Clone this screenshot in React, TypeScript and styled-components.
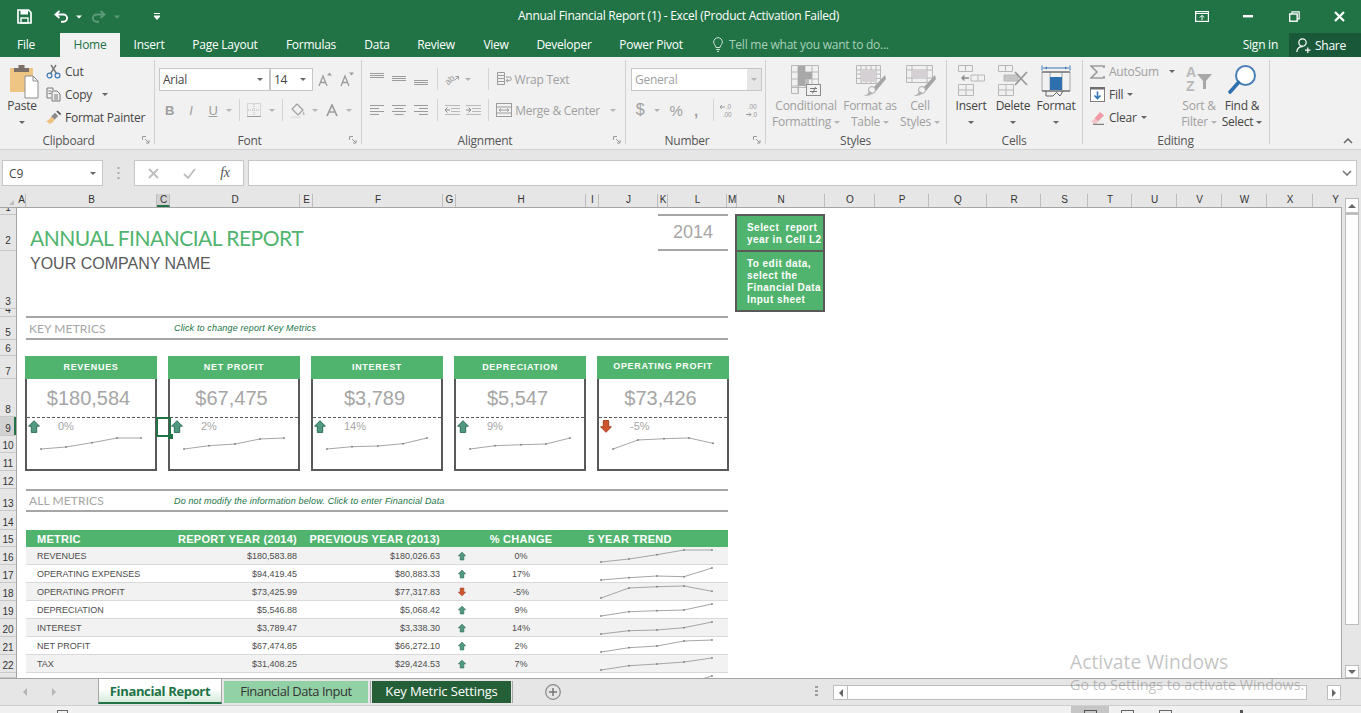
import React from "react";
import styled, { createGlobalStyle } from "styled-components";

const excelGreen = "#217346";
const reportGreen = "#50b46e";
const uiFont = `"Open Sans", "Liberation Sans", sans-serif`;
const arial = `"Liberation Sans", Arial, sans-serif`;

const GlobalStyle = createGlobalStyle`
  html, body { margin: 0; padding: 0; overflow: hidden; background: #fff; }
  * { box-sizing: border-box; }
`;

const Window = styled.div`
  position: relative;
  width: 1361px;
  height: 713px;
  overflow: hidden;
  display: flex;
  flex-direction: column;
  font-family: ${uiFont};
  font-size: 12px;
  letter-spacing: -0.25px;
  color: #444;
  background: #e6e6e6;
`;

/* title bar */
const TitleBar = styled.div`
  position: relative;
  height: 33px;
  flex: none;
  display: flex;
  align-items: center;
  background: ${excelGreen};
  color: #fff;
`;
const TitleText = styled.div`
  position: absolute;
  left: 0;
  right: 4px;
  top: 8px;
  text-align: center;
  line-height: 16px;
`;
const QuickCell = styled.div<{ $w: number }>`
  width: ${(p) => p.$w}px;
  height: 30px;
  flex: none;
  display: flex;
  align-items: center;
  justify-content: center;
`;
const Spring = styled.div`
  flex: 1;
`;

/* ribbon tabs */
const TabBar = styled.div`
  height: 24px;
  flex: none;
  display: flex;
  background: ${excelGreen};
  color: #fff;
`;
const RibbonTab = styled.div<{ $w: number; $active?: boolean }>`
  width: ${(p) => p.$w}px;
  flex: none;
  text-align: center;
  line-height: 23px;
  background: ${(p) => (p.$active ? "#f1f1f1" : "transparent")};
  color: ${(p) => (p.$active ? excelGreen : "#fff")};
`;
const FileGap = styled.div`
  width: 8px;
  flex: none;
`;
const TellMe = styled.div`
  margin-left: 15px;
  display: flex;
  align-items: center;
  gap: 6px;
  color: #a9d0b9;
  height: 23px;
`;
const SignIn = styled.div`
  line-height: 23px;
  margin-right: 11px;
`;
const ShareBtn = styled.div`
  width: 72px;
  display: flex;
  align-items: center;
  gap: 4px;
  padding-left: 7px;
  background: #19593a;
`;

/* ribbon */
const Ribbon = styled.div`
  position: relative;
  height: 93px;
  flex: none;
  display: flex;
  background: #f1f1f1;
  border-bottom: 1px solid #d2d2d2;
`;
const Group = styled.div<{ $w: number }>`
  width: ${(p) => p.$w}px;
  flex: none;
  display: flex;
  flex-direction: column;
  position: relative;
  &::after {
    content: "";
    position: absolute;
    right: 0;
    top: 3px;
    bottom: 5px;
    width: 1px;
    background: #d0d0d0;
  }
`;
const GroupBody = styled.div<{ $pl?: number }>`
  height: 75px;
  flex: none;
  display: flex;
  padding-left: ${(p) => p.$pl ?? 0}px;
`;
const GroupFoot = styled.div<{ $launch?: boolean }>`
  position: relative;
  height: 17px;
  flex: none;
  text-align: center;
  line-height: 17px;
  padding-right: ${(p) => (p.$launch ? 18 : 2)}px;
  color: #555;
`;
const Launcher = styled.svg`
  position: absolute;
  right: 5px;
  top: 4px;
`;
const RowStack = styled.div`
  display: flex;
  flex-direction: column;
  gap: 9px;
  padding-top: 11px;
`;
const ToolRow = styled.div`
  display: flex;
  height: 22px;
  align-items: center;
`;
const Cell = styled.div<{ $w: number; $off?: boolean }>`
  width: ${(p) => p.$w}px;
  height: 22px;
  flex: none;
  display: flex;
  align-items: center;
  justify-content: center;
  white-space: nowrap;
  color: ${(p) => (p.$off ? "#a0a0a0" : "#444")};
`;
const Sep = styled.div`
  width: 1px;
  height: 22px;
  flex: none;
  background: #d4d4d4;
`;
const Glyph = styled.span<{ $size?: number; $bold?: boolean; $italic?: boolean; $under?: boolean }>`
  font-family: ${arial};
  font-size: ${(p) => p.$size ?? 13}px;
  font-weight: ${(p) => (p.$bold ? 700 : 400)};
  font-style: ${(p) => (p.$italic ? "italic" : "normal")};
  text-decoration: ${(p) => (p.$under ? "underline" : "none")};
  color: #a0a0a0;
`;
const Caret = styled.i<{ $dim?: boolean }>`
  display: block;
  width: 0;
  height: 0;
  flex: none;
  border-left: 3px solid transparent;
  border-right: 3px solid transparent;
  border-top: 3px solid ${(p) => (p.$dim ? "#b4b4b4" : "#666")};
`;
const Combo = styled.div<{ $w: number; $off?: boolean }>`
  width: ${(p) => p.$w}px;
  height: 23px;
  flex: none;
  display: flex;
  align-items: center;
  justify-content: space-between;
  padding: 0 6px 0 3px;
  background: #fff;
  border: 1px solid #c6c6c6;
  color: ${(p) => (p.$off ? "#a0a0a0" : "#444")};
  margin-left: ${(p) => (p.$off ? 5 : 0)}px;
`;
const ComboDrop = styled.div`
  width: 14px;
  height: 21px;
  margin-right: -6px;
  display: flex;
  align-items: center;
  justify-content: center;
  background: #e6e6e6;
`;
const SmallColumn = styled.div<{ $pl: number; $w: number }>`
  width: ${(p) => p.$w}px;
  flex: none;
  padding: 3px 0 0 ${(p) => p.$pl}px;
`;
const SmallBtn = styled.div<{ $off?: boolean }>`
  height: 23px;
  display: flex;
  align-items: center;
  gap: 4px;
  color: ${(p) => (p.$off ? "#a0a0a0" : "#444")};
`;
const IconSlot = styled.div`
  width: 15px;
  height: 16px;
  flex: none;
  display: flex;
  align-items: center;
  justify-content: center;
`;
const BigBtn = styled.div<{ $w: number; $off?: boolean }>`
  width: ${(p) => p.$w}px;
  flex: none;
  display: flex;
  flex-direction: column;
  align-items: center;
  color: ${(p) => (p.$off ? "#a0a0a0" : "#444")};
`;
const BigIcon = styled.div<{ $nudge?: number }>`
  height: 41px;
  padding: 8px 0 0 ${(p) => p.$nudge ?? 0}px;
  flex: none;
`;
const BigLabel = styled.div`
  line-height: 16px;
  text-align: center;
  white-space: nowrap;
  display: flex;
  align-items: center;
  justify-content: center;
  gap: 3px;
  min-height: 16px;
`;
const Collapse = styled.svg`
  position: absolute;
  right: 8px;
  bottom: 5px;
`;

/* formula bar */
const FormulaBar = styled.div`
  height: 44px;
  flex: none;
  display: flex;
  align-items: flex-start;
  padding: 10px 4px 0 2px;
  background: #e6e6e6;
`;
const FormulaBox = styled.div<{ $w?: number }>`
  width: ${(p) => (p.$w ? `${p.$w}px` : "auto")};
  flex: ${(p) => (p.$w ? "none" : 1)};
  height: 26px;
  display: flex;
  align-items: center;
  background: #fff;
  border: 1px solid #c6c6c6;
`;
const NameText = styled.div`
  flex: 1;
  padding-left: 6px;
  letter-spacing: 0;
`;
const FormulaDots = styled.div`
  width: 31px;
  height: 26px;
  flex: none;
  display: flex;
  align-items: center;
  justify-content: center;
`;
const FxCell = styled.div`
  width: 36px;
  flex: none;
  display: flex;
  justify-content: center;
`;
const FxText = styled.span`
  font-family: "Liberation Serif", serif;
  font-style: italic;
  font-size: 14px;
  color: #555;
`;

/* worksheet */
const Main = styled.div`
  height: 484px;
  flex: none;
  display: flex;
`;
const GridArea = styled.div`
  width: 1342px;
  flex: none;
  display: flex;
  flex-direction: column;
`;
const ColHeads = styled.div`
  height: 13px;
  flex: none;
  display: flex;
  overflow: hidden;
`;
const Corner = styled.div`
  width: 17px;
  flex: none;
  display: flex;
  align-items: flex-end;
  justify-content: flex-end;
  padding: 0 3px 2px 0;
`;
const ColHead = styled.div<{ $w: number; $sel?: boolean }>`
  width: ${(p) => p.$w}px;
  flex: none;
  padding-left: 1px;
  font-family: ${arial};
  font-size: 10px;
  letter-spacing: 0;
  line-height: 12px;
  text-align: center;
  color: #333;
  border-right: 1px solid #bdbdbd;
  background: ${(p) => (p.$sel ? "#d2d2d2" : "transparent")};
  border-bottom: ${(p) => (p.$sel ? `2px solid ${excelGreen}` : "0")};
`;
const GridBody = styled.div`
  flex: 1;
  display: flex;
  min-height: 0;
  border-top: 1px solid #a6a6a6;
`;
const RowHeads = styled.div`
  width: 17px;
  flex: none;
  display: flex;
  flex-direction: column;
  overflow: hidden;
  border-right: 1px solid #a6a6a6;
`;
const RowHead = styled.div<{ $h: number; $sel?: boolean; $lift?: number }>`
  height: ${(p) => p.$h}px;
  flex: none;
  display: flex;
  align-items: flex-end;
  justify-content: center;
  overflow: hidden;
  padding-bottom: ${(p) => p.$lift ?? 0}px;
  font-family: ${arial};
  font-size: 10px;
  letter-spacing: 0;
  line-height: 12px;
  color: #333;
  border-bottom: 1px solid #c8c8c8;
  background: ${(p) => (p.$sel ? "#d2d2d2" : "transparent")};
  box-shadow: ${(p) => (p.$sel ? `inset -2px 0 0 ${excelGreen}` : "none")};
`;
const Sheet = styled.div`
  position: relative;
  flex: 1;
  display: flex;
  overflow: hidden;
  background: #fff;
  border-right: 1px solid #a6a6a6;
  font-family: ${arial};
  letter-spacing: 0;
`;
const Report = styled.div`
  width: 702px;
  margin-left: 9px;
  flex: none;
  display: flex;
  flex-direction: column;
`;
const ReportHead = styled.div`
  height: 108px;
  flex: none;
  display: flex;
  justify-content: space-between;
`;
const TitleBlock = styled.div`
  padding: 16px 0 0 4px;
`;
const ReportTitle = styled.div`
  font-family: Lato, sans-serif;
  font-size: 21px;
  line-height: 28px;
  letter-spacing: -0.5px;
  color: ${reportGreen};
`;
const CompanyName = styled.div`
  font-size: 16px;
  line-height: 20px;
  margin-top: 2px;
  color: #595959;
`;
const YearBox = styled.div`
  width: 70px;
  height: 37px;
  margin-top: 6px;
  display: flex;
  align-items: center;
  justify-content: center;
  font-size: 18px;
  color: #a6a6a6;
  border-top: 2px solid #a6a6a6;
  border-bottom: 2px solid #a6a6a6;
`;
const SectionBar = styled.div<{ $mt?: number; $h: number }>`
  height: ${(p) => p.$h}px;
  flex: none;
  margin-top: ${(p) => p.$mt ?? 0}px;
  display: flex;
  align-items: center;
  padding-left: 3px;
  border-top: 2px solid #a6a6a6;
  border-bottom: 2px solid #a6a6a6;
`;
const SectionTitle = styled.div`
  width: 145px;
  flex: none;
  font-family: Lato, sans-serif;
  font-size: 12px;
  letter-spacing: 0.1px;
  color: #a6a6a6;
`;
const SectionHint = styled.div`
  font-size: 9px;
  font-style: italic;
  letter-spacing: 0.15px;
  color: ${excelGreen};
`;
const CardRow = styled.div`
  height: 115px;
  flex: none;
  margin: 16px 0 0 -1px;
  display: flex;
  gap: 11px;
`;
const Card = styled.div`
  flex: 1;
  display: flex;
  flex-direction: column;
`;
const CardHead = styled.div<{ $up?: number }>`
  height: 23px;
  flex: none;
  text-align: center;
  padding-bottom: ${(p) => p.$up ?? 0}px;
  line-height: ${(p) => 23 - (p.$up ?? 0)}px;
  font-size: 9px;
  font-weight: 700;
  letter-spacing: 0.7px;
  color: #fff;
  background: ${reportGreen};
`;
const CardBody = styled.div`
  flex: 1;
  display: flex;
  flex-direction: column;
  border: 2px solid #595959;
  border-top: 0;
`;
const CardValue = styled.div`
  height: 39px;
  flex: none;
  display: flex;
  align-items: center;
  justify-content: center;
  padding: 1px 5px 0 0;
  font-size: 20px;
  color: #a6a6a6;
  border-bottom: 1px dashed #595959;
`;
const CardDelta = styled.div`
  height: 18px;
  flex: none;
  display: flex;
  align-items: center;
  padding: 0 0 2px 1px;
  font-size: 11px;
  color: #a6a6a6;
`;
const DeltaText = styled.span`
  margin-left: 18px;
`;
const Notes = styled.div`
  width: 90px;
  margin: 6px 0 0 7px;
  flex: none;
  align-self: flex-start;
  border: 2px solid #595959;
  background: ${reportGreen};
`;
const Note = styled.div<{ $divide?: boolean }>`
  padding: 6px 0 4px 10px;
  font-size: 10px;
  font-weight: 700;
  line-height: 12px;
  letter-spacing: 0.45px;
  color: #fff;
  white-space: nowrap;
  border-top: ${(p) => (p.$divide ? "2px solid #595959" : "0")};
`;
const Table = styled.div`
  margin-top: 18px;
  flex: none;
`;
const TRow = styled.div<{ $odd?: boolean }>`
  height: 18px;
  display: grid;
  grid-template-columns: 152px 120px 143px 42px 76px 169px;
  align-items: center;
  font-size: 9px;
  color: #4d4d4d;
  background: ${(p) => (p.$odd ? "#f2f2f2" : "#fff")};
  border-bottom: 1px solid #d9d9d9;
`;
const THead = styled(TRow)`
  height: 17px;
  font-size: 11px;
  font-weight: 700;
  letter-spacing: 0.27px;
  color: #fff;
  background: ${reportGreen};
  border-bottom: 0;
`;
const MetricCell = styled.div`
  padding-left: 11px;
  white-space: nowrap;
`;
const NumCell = styled.div`
  padding-right: 1px;
  text-align: right;
  white-space: nowrap;
`;
const MidCell = styled.div`
  display: flex;
  justify-content: center;
`;
const TrendCell = styled.div`
  height: 18px;
  padding-left: 41px;
  align-self: start;
`;
const TrendTitle = styled.div`
  padding-left: 29px;
  white-space: nowrap;
`;
const Selection = styled.div`
  position: absolute;
  left: 139px;
  top: 209px;
  width: 15px;
  height: 20px;
  border: 2px solid ${excelGreen};
  &::after {
    content: "";
    position: absolute;
    right: -4px;
    bottom: -4px;
    width: 5px;
    height: 5px;
    background: ${excelGreen};
  }
`;

/* scrollbars */
const VScroll = styled.div`
  flex: 1;
  padding: 4px 2px 0 3px;
  display: flex;
  flex-direction: column;
`;
const ScrollBtn = styled.div<{ $w?: number; $h?: number }>`
  width: ${(p) => (p.$w ? `${p.$w}px` : "auto")};
  height: ${(p) => (p.$h ? `${p.$h}px` : "auto")};
  flex: none;
  display: flex;
  align-items: center;
  justify-content: center;
  background: #fff;
  border: 1px solid #bdbdbd;
`;
const VThumb = styled.div`
  height: 412px;
  flex: none;
  background: #fff;
  border: 1px solid #bdbdbd;
  border-top-width: 2px;
`;
const VTrack = styled.div`
  flex: 1;
`;
const UpTri = styled.i`
  display: block;
  width: 0;
  height: 0;
  border-left: 4px solid transparent;
  border-right: 4px solid transparent;
  border-bottom: 4px solid #666;
`;
const DownTri = styled(UpTri)`
  border-bottom: 0;
  border-top: 4px solid #666;
`;
const LeftTri = styled.i`
  display: block;
  width: 0;
  height: 0;
  border-top: 4px solid transparent;
  border-bottom: 4px solid transparent;
  border-right: 4px solid #666;
`;
const RightTri = styled(LeftTri)`
  border-right: 0;
  border-left: 4px solid #666;
`;
const DimLeft = styled(LeftTri)`
  border-right-color: #b4b4b4;
`;
const DimRight = styled(RightTri)`
  border-left-color: #b4b4b4;
`;

/* sheet tabs */
const tabSpacing = { current: -0.35, light: -0.45, dark: -0.15 };
const SheetTabs = styled.div`
  height: 28px;
  flex: none;
  display: flex;
  background: #e6e6e6;
  border-top: 1px solid #a6a6a6;
  border-bottom: 1px solid #cfcfcf;
`;
const TabNav = styled.div`
  width: 98px;
  height: 25px;
  flex: none;
  display: flex;
  align-items: center;
  gap: 25px;
  padding-left: 23px;
`;
const SheetTab = styled.div<{ $w: number; $kind: "current" | "light" | "dark" }>`
  width: ${(p) => p.$w}px;
  flex: none;
  margin-top: ${(p) => (p.$kind === "current" ? 0 : 2)}px;
  height: ${(p) => (p.$kind === "current" ? 25 : 22)}px;
  text-align: center;
  font-size: 13px;
  letter-spacing: ${(p) => tabSpacing[p.$kind]}px;
  line-height: ${(p) => (p.$kind === "current" ? 25 : 21)}px;
  font-weight: ${(p) => (p.$kind === "current" ? 700 : 400)};
  color: ${(p) => (p.$kind === "current" ? excelGreen : p.$kind === "dark" ? "#fff" : "#333")};
  background: ${(p) =>
    p.$kind === "current"
      ? "linear-gradient(#ffffff 40%, #d4ecdb)"
      : p.$kind === "dark"
        ? "#245f38"
        : "#92d1a6"};
  border-bottom: ${(p) => (p.$kind === "current" ? `2px solid ${excelGreen}` : "0")};
  border-left: ${(p) => (p.$kind === "current" ? "1px solid #a6a6a6" : "0")};
  border-right: ${(p) => (p.$kind === "current" ? "1px solid #a6a6a6" : "0")};
`;
const TabSep = styled.div<{ $ml: number; $mr: number }>`
  width: 1px;
  height: 22px;
  margin: 2px ${(p) => p.$mr}px 0 ${(p) => p.$ml}px;
  flex: none;
  background: #a6a6a6;
`;
const AddSheet = styled.div`
  width: 16px;
  height: 16px;
  margin: 5px 0 0 32px;
  flex: none;
`;
const TabDots = styled.div`
  width: 3px;
  height: 12px;
  margin: 7px 0 0 254px;
  flex: none;
  background: repeating-linear-gradient(#9c9c9c 0 2px, transparent 2px 4px);
`;
const HScroll = styled.div`
  width: 508px;
  height: 15px;
  margin: 6px 0 0 15px;
  flex: none;
  display: flex;
`;
const HThumb = styled.div`
  width: 459px;
  flex: none;
  background: #fff;
  border: 1px solid #bdbdbd;
  border-left-width: 0;
`;
const HTrack = styled.div`
  flex: 1;
`;

/* status bar */
const StatusBar = styled.div`
  flex: 1;
  display: flex;
  background: #f1f1f1;
  overflow: hidden;
`;
const StatusMark = styled.div<{ $ml: number; $w: number }>`
  width: ${(p) => p.$w}px;
  height: 3px;
  margin: 4px 0 0 ${(p) => p.$ml}px;
  flex: none;
  border: 1px solid #666;
  border-bottom: 0;
`;
const ViewActive = styled.div`
  width: 38px;
  margin-left: 1003px;
  flex: none;
  display: flex;
  justify-content: center;
  background: #c6c6c6;
`;
const ViewIcon = styled.div`
  width: 13px;
  height: 3px;
  margin-top: 4px;
  border: 1px solid #555;
  border-bottom: 0;
`;
const ZoomTick = styled.div`
  width: 3px;
  height: 3px;
  margin: 4px 0 0 68px;
  flex: none;
  background: #555;
`;

const Watermark = styled.div`
  position: absolute;
  left: 1070px;
  top: 648px;
  color: rgba(110, 110, 110, 0.42);
  letter-spacing: 0;
  pointer-events: none;
  white-space: nowrap;
`;
const WatermarkTitle = styled.div`
  font-size: 19.3px;
  line-height: 27px;
`;
const WatermarkSub = styled.div`
  font-size: 14.3px;
  line-height: 20px;
`;

/* ---- icons ---- */
const Svg = ({ w, h, children }: { w: number; h: number; children: React.ReactNode }) => (
  <svg width={w} height={h} viewBox={`0 0 ${w} ${h}`} fill="none" style={{ display: "block" }}>
    {children}
  </svg>
);

const gray = "#9c9c9c";
const lightGray = "#b8b8b8";

const SaveIcon = () => (
  <Svg w={15} h={15}>
    <path d="M1 1h10.500L14 3.500V14H1z" stroke="#fff" strokeWidth="1.700" />
    <rect x="3.500" y="1" width="7.500" height="4.500" fill="#fff" />
    <rect x="4" y="9" width="7" height="5" stroke="#fff" strokeWidth="1.400" />
  </Svg>
);
const UndoIcon = ({ color, flip }: { color: string; flip?: boolean }) => (
  <svg width="15" height="13" viewBox="0 0 15 13" fill="none" style={{ transform: flip ? "scaleX(-1)" : "none" }}>
    <path d="M5.500 1L1.500 4.500L5.500 8M2 4.500h7.500a3.600 3.600 0 0 1 0 7.200H7" stroke={color} strokeWidth="1.900" />
  </svg>
);
const TinyCaret = ({ color }: { color: string }) => (
  <Svg w={6} h={4}>
    <path d="M0 .5h6L3 3.500z" fill={color} />
  </Svg>
);
const CustomizeIcon = () => (
  <Svg w={7} h={7}>
    <path d="M0 .5h6M0 3h6L3 6.500z" stroke="#fff" strokeWidth="1" fill="#fff" />
  </Svg>
);
const DisplayIcon = () => (
  <Svg w={14} h={11}>
    <rect x=".6" y=".6" width="12.800" height="9.800" stroke="#fff" strokeWidth="1.200" />
    <path d="M1 2.500h12M7 9V4.500M4.800 6.500L7 4.300l2.200 2.200" stroke="#fff" />
  </Svg>
);
const MinIcon = () => (
  <Svg w={10} h={3}>
    <rect width="10" height="2.400" fill="#fff" />
  </Svg>
);
const RestoreIcon = () => (
  <Svg w={11} h={11}>
    <rect x=".7" y="3" width="7.500" height="7.200" stroke="#fff" strokeWidth="1.400" />
    <path d="M3 3V.8h7.200v7H8" stroke="#fff" strokeWidth="1.200" />
  </Svg>
);
const CloseIcon = () => (
  <Svg w={11} h={11}>
    <path d="M1 1l9 9M10 1l-9 9" stroke="#fff" strokeWidth="2.200" />
  </Svg>
);
const BulbIcon = () => (
  <Svg w={10} h={15}>
    <path d="M3 10.500C2.500 8 .7 7.500.7 5a4.300 4.300 0 0 1 8.600 0c0 2.500-1.800 3-2.300 5.500zM3.200 12.500h3.600M4 14.400h2" stroke="#cfe3d7" strokeWidth="1" />
  </Svg>
);
const PersonIcon = () => (
  <Svg w={15} h={15}>
    <circle cx="6.500" cy="4.500" r="3.700" stroke="#fff" strokeWidth="1.200" />
    <path d="M.8 14c.3-3.200 2.400-5.400 5.700-5.400M9 12.200h5.500M11.800 9.500V15" stroke="#fff" strokeWidth="1.200" />
  </Svg>
);
const PasteIcon = () => (
  <Svg w={30} h={34}>
    <path d="M1 3h23v24H1z" fill="#eec583" />
    <path d="M5 3h15v4H5zM9.500 0h6v3h-6z" fill="#7b7067" />
    <path d="M16 11h8l5 5v17H16z" fill="#fff" stroke="#8e8e8e" />
    <path d="M24 11v5h5" stroke="#8e8e8e" />
  </Svg>
);
const CutIcon = () => (
  <Svg w={15} h={15}>
    <path d="M10 1L4.200 10M5 1l5.800 9" stroke="#787878" strokeWidth="1.400" />
    <circle cx="3.500" cy="11.500" r="2.400" stroke="#3d78b2" strokeWidth="1.200" />
    <circle cx="11.500" cy="11.500" r="2.400" stroke="#3d78b2" strokeWidth="1.200" />
  </Svg>
);
const CopyIcon = () => (
  <Svg w={15} h={15}>
    <path d="M1 1h6v2M1 1v10h4M2.500 4H5M2.500 6.500H5" stroke="#777" />
    <path d="M6 4h5l3 3v7H6zM8 8h4M8 10h4M8 12h4" stroke="#777" />
  </Svg>
);
const PainterIcon = () => (
  <Svg w={16} h={15}>
    <path d="M9.500 2.500L13 6 9 10 5.500 6.500z" fill="#8a8a8a" />
    <path d="M11 1l1.500-1L16 3.500 15 5z" fill="#555" />
    <path d="M5.500 6.500L9 10c-1 2.500-3 4-5.500 4.500C3 13 1.500 12 0 11.500c2.500-.5 4.500-2.500 5.500-5z" fill="#f0c27f" />
  </Svg>
);
const GrowFont = ({ up }: { up: boolean }) => (
  <Svg w={14} h={15}>
    <path d="M1 14L5 4l4 10M2.500 10.500h5" stroke={gray} strokeWidth="1.300" />
    <path d={up ? "M9 3.500h5L11.500 .5z" : "M9 .5h5L11.500 3.500z"} fill={gray} />
  </Svg>
);
const BorderIcon = () => (
  <Svg w={14} h={14}>
    <rect x=".5" y=".5" width="13" height="13" stroke={lightGray} strokeDasharray="1 1" />
    <path d="M7 1v12M1 7h12" stroke={lightGray} strokeDasharray="1 1" />
    <path d="M0 13.500h14" stroke={gray} />
  </Svg>
);
const FillIcon = () => (
  <Svg w={16} h={15}>
    <path d="M7 1l6 6-5 5-6-6zM7 1L5 3" stroke={gray} strokeWidth="1.100" />
    <path d="M1 13h10v2H1z" fill="#e4e4e4" />
    <path d="M13 8c1 1.500 2 2.500 1.500 3.500-.5.800-1.800.5-1.800-.5z" fill={lightGray} />
  </Svg>
);
const FontColorIcon = () => (
  <Svg w={14} h={13}>
    <path d="M2 12L7 1l5 11M3.800 8h6.400" stroke={gray} strokeWidth="1.700" />
  </Svg>
);
const Lines = ({ align }: { align: "l" | "c" | "r" }) => (
  <Svg w={14} h={12}>
    {[14, 9, 14, 9].map((w, i) => {
      const x = align === "l" ? 0 : align === "r" ? 14 - w : (14 - w) / 2;
      return <path key={i} d={`M${x} ${i * 3 + 1.5}h${w}`} stroke={gray} />;
    })}
  </Svg>
);
const VAlign = ({ top }: { top: number }) => (
  <Svg w={14} h={12}>
    {[0, 2, 4].map((d) => (
      <path key={d} d={`M0 ${top + d + 0.5}h14`} stroke={gray} />
    ))}
  </Svg>
);
const OrientIcon = () => (
  <svg width="15" height="14" viewBox="0 0 15 14" fill="none" style={{ display: "block" }}>
    <text x="1" y="12" fontFamily={arial} fontSize="9" fill={gray} transform="rotate(-45 4 10)">ab</text>
    <path d="M9.500 8.500l4-4M13.500 4.500v3M13.500 4.500h-3" stroke={gray} />
  </svg>
);
const IndentIcon = ({ out }: { out: boolean }) => (
  <Svg w={15} h={12}>
    <path d="M0 1.500h15M6 4.500h9M6 7.500h9M0 10.500h15" stroke={lightGray} />
    <path d={out ? "M5 6H0M2.500 3.500L0 6l2.500 2.500" : "M0 6h5M2.500 3.500L5 6 2.500 8.500"} stroke="#8d8d8d" />
  </Svg>
);
const WrapIcon = () => (
  <Svg w={15} h={14}>
    <path d="M.5 .5h7v3h-7zM.5 3.500h7v3h-7zM.5 6.500h7v3h-7zM.5 9.500h7v3h-7z" stroke={gray} />
    <path d="M9 5h3.500a1.800 1.800 0 0 1 0 3.600H9.500M11 7l-2 1.600 2 1.600" stroke={gray} />
  </Svg>
);
const MergeIcon = () => (
  <Svg w={16} h={14}>
    <rect x=".5" y=".5" width="15" height="13" stroke={gray} />
    <path d="M.5 4h15M.5 10h15M3 7h10M5 5.500L3 7l2 1.500M11 5.500L13 7l-2 1.500" stroke={gray} />
  </Svg>
);
const DecimalIcon = ({ more }: { more: boolean }) => (
  <svg width="16" height="15" viewBox="0 0 16 15" fill="none" style={{ display: "block" }}>
    <text x={more ? 4 : 7} y="6" fontFamily={arial} fontSize="6.5" fill={gray}>{more ? ".00" : ".0"}</text>
    <text x={more ? 8 : 4} y="13.500" fontFamily={arial} fontSize="6.5" fill={gray}>{more ? ".0" : ".00"}</text>
    <path d={more ? "M2 11.500h5M5 9.500l2 2-2 2" : "M1 4h5M3 2L1 4l2 2"} stroke={gray} />
  </svg>
);
const CondIcon = () => (
  <Svg w={30} h={31}>
    <path d="M.5 .5h27v22h-27zM7 .5v28M14 .5v22M21 .5v22M.5 7h27M.5 14h27M.5 21h7v7.500h-7z" stroke={lightGray} />
    <path d="M7 1h7v20H7z" fill="#a8a8a8" />
    <path d="M14 7h7v7h-7z" fill="#a8a8a8" />
    <path d="M14 14h4v7h-4z" fill="#bdbdbd" />
    <rect x="15.500" y="19.500" width="14" height="11" fill="#f1f1f1" stroke="#8c8c8c" />
    <path d="M19 23.500h7M19 26.500h7M24.500 22l-3 6.500" stroke="#777" />
  </Svg>
);
const TableIcon = ({ cell }: { cell?: boolean }) => (
  <Svg w={30} h={31}>
    {cell ? (
      <path d="M.5 .5h26v17h-26zM6 .5v17M21 .5v17M.5 5h26M.5 13h26" stroke={lightGray} />
    ) : (
      <path d="M.5 .5h24v18h-24zM5 .5v18M10 .5v18M15 .5v18M20 .5v18M.5 5h24M.5 9h24M.5 13.500h24" stroke={lightGray} />
    )}
    <path d={cell ? "M6 5h15v8H6z" : "M5 5h15v12H5z"} fill="#d4d0d4" />
    <path d="M29 10L17 23l3 3L30 14z" fill="#a6a6a6" />
    <circle cx="16" cy="25" r="3.500" fill="#f1f1f1" stroke="#a6a6a6" />
    <path d="M7 31c3-.5 5-2 6.500-5l3 2c-1 2-3 3-9.500 3z" fill="#b0b0b0" />
  </Svg>
);
const InsertIcon = () => (
  <Svg w={27} h={31}>
    <path d="M.5 .5h14v6h-14zM7.500 .5v6M.5 19.500h15v11h-15zM8 19.500v11M.5 25h15" stroke={lightGray} />
    <path d="M13 10h13.500v6H13zM20 10v6" stroke={lightGray} />
    <path d="M11 13H4M6.500 10.500L4 13l2.500 2.500" stroke="#8a8a8a" strokeWidth="1.300" />
  </Svg>
);
const DeleteIcon = () => (
  <Svg w={30} h={31}>
    <path d="M.5 .5h14v6h-14zM7.500 .5v6M.5 19.500h15v11h-15zM8 19.500v11M.5 25h15" stroke={lightGray} />
    <path d="M6 10h14v6H6z" fill="#c6c6c6" stroke={lightGray} />
    <path d="M17 7l12 13M29 7L17 20" stroke="#9c9c9c" strokeWidth="1.800" />
  </Svg>
);
const FormatIcon = () => (
  <Svg w={30} h={33}>
    <path d="M1 .5v5M29 .5v5M2 3h26" stroke="#3d78b2" />
    <path d="M4 3l2-1.500v3zM26 3l-2-1.500v3z" fill="#3d78b2" />
    <path d="M1 7h28v19H1zM9 7v19M21 7v19" stroke="#a6a6a6" />
    <path d="M1 7h28M1 26h28" stroke="#555" />
    <rect x="9" y="12" width="12" height="13" fill="#2e6fad" />
    <path d="M5 26v5h7l4-4M15 27l4 4 3-5" stroke="#666" />
  </Svg>
);
const SigmaIcon = () => (
  <Svg w={15} h={14}>
    <path d="M14 3V1H1l6 6-6 6h13v-2" stroke={gray} strokeWidth="1.700" />
  </Svg>
);
const FillDown = () => (
  <Svg w={15} h={15}>
    <rect x=".5" y=".5" width="14" height="14" fill="#fff" stroke="#808080" />
    <path d="M0 0h15v2.500H0z" fill="#6e6e6e" />
    <path d="M7.500 4.500v7M4.500 8.500l3 3 3-3" stroke="#2e75b6" strokeWidth="1.600" />
  </Svg>
);
const EraserIcon = () => (
  <Svg w={15} h={14}>
    <path d="M10 1l4 3.500-6 6-3.500-3z" fill="#ef9aa6" />
    <path d="M4.500 7.500L8 10.500 6.500 12.500H3.500L1.500 10.500z" fill="#f5c2c8" />
    <path d="M3 13.300h11" stroke="#666" />
  </Svg>
);
const SortIcon = () => (
  <svg width="29" height="29" viewBox="0 0 29 29" style={{ display: "block" }}>
    <text x="1" y="12" fontFamily={arial} fontSize="14" fontWeight="700" fill={lightGray}>A</text>
    <text x="1" y="26" fontFamily={arial} fontSize="14" fontWeight="700" fill={lightGray}>Z</text>
    <path d="M12 9h15l-6 7v8h-3v-8z" fill="#a8a8a8" />
  </svg>
);
const FindIcon = () => (
  <Svg w={30} h={31}>
    <circle cx="18.500" cy="10.500" r="9.500" stroke="#4a80b4" strokeWidth="2" fill="#fff" />
    <path d="M11.500 17.500L3 27" stroke="#2e6fad" strokeWidth="3.600" strokeLinecap="round" />
  </Svg>
);
const LaunchIcon = () => (
  <Launcher width="8" height="8" viewBox="0 0 8 8" fill="none">
    <path d="M.5 4V.5H4M3 3l4 4M7 4v3H4" stroke="#9a9a9a" />
  </Launcher>
);
const TrendArrow = ({ down, small }: { down?: boolean; small?: boolean }) => (
  <svg
    width={small ? 8 : 12}
    height={small ? 10 : 13}
    viewBox="0 0 12 13"
    style={{ display: "block", flex: "none", transform: down ? "scaleY(-1)" : "none" }}
  >
    <path
      d="M6 .7L11.400 6.200H8.700V12.400H3.300V6.200H.6z"
      fill={down ? "#cf5530" : "#4f9a80"}
      stroke={down ? "#a63f20" : "#2f6e5a"}
      strokeWidth="1"
    />
  </svg>
);
const Spark = ({ xs, ys, w, h }: { xs: number[]; ys: number[]; w: number; h: number }) => (
  <Svg w={w} h={h}>
    <polyline points={xs.map((x, i) => `${x},${ys[i]}`).join(" ")} stroke="#a6a6a6" strokeWidth="1" fill="none" />
    {xs.map((x, i) => (
      <rect key={x} x={x - 0.8} y={ys[i] - 0.8} width="1.6" height="1.6" fill="#7d7d7d" />
    ))}
  </Svg>
);

/* ---- data ---- */
const ribbonTabs: [string, number][] = [
  ["Insert", 58],
  ["Page Layout", 94],
  ["Formulas", 78],
  ["Data", 54],
  ["Review", 64],
  ["View", 56],
  ["Developer", 80],
  ["Power Pivot", 94],
];
const columns: [string, number][] = [
  ["A", 9], ["B", 131], ["C", 13], ["D", 130], ["E", 13], ["F", 130], ["G", 13], ["H", 130],
  ["I", 13], ["J", 59], ["K", 10], ["L", 59], ["M", 10], ["N", 88], ["O", 50], ["P", 54],
  ["Q", 58], ["R", 54], ["S", 47], ["T", 44], ["U", 45], ["V", 45], ["W", 45], ["X", 46], ["Y", 45],
];
const rowHeights = [7, 36, 58, 8, 23, 16, 23, 38, 19, 17, 18, 18, 22, 19, 17, 18, 18, 18, 18, 18, 18, 18, 5];

const cardXs = [14, 39, 65, 90, 114];
const cards = [
  { name: "REVENUES", value: "$180,584", delta: "0%", ys: [13, 11, 6.7, 2, 2] },
  { name: "NET PROFIT", value: "$67,475", delta: "2%", ys: [13, 9.7, 8, 3, 2] },
  { name: "INTEREST", value: "$3,789", delta: "14%", ys: [13, 10.7, 10, 7.7, 2] },
  { name: "DEPRECIATION", value: "$5,547", delta: "9%", ys: [13, 9.7, 8.7, 8, 2] },
  { name: "OPERATING PROFIT", value: "$73,426", delta: "-5%", ys: [13, 4, 2.7, 2, 7.3], down: true, up: 2 },
];

const rowXs = [1, 29, 57, 84, 112];
const metrics = [
  { name: "REVENUES", cur: "$180,583.88", prev: "$180,026.63", pct: "0%", ys: [15, 12, 7.7, 3, 3] },
  { name: "OPERATING EXPENSES", cur: "$94,419.45", prev: "$80,883.33", pct: "17%", ys: [15, 12.7, 11, 11.7, 3] },
  { name: "OPERATING PROFIT", cur: "$73,425.99", prev: "$77,317.83", pct: "-5%", ys: [15, 5, 3.7, 3, 8.3], down: true },
  { name: "DEPRECIATION", cur: "$5,546.88", prev: "$5,068.42", pct: "9%", ys: [15, 10.7, 9.7, 9, 3] },
  { name: "INTEREST", cur: "$3,789.47", prev: "$3,338.30", pct: "14%", ys: [15, 11.7, 11, 8.7, 3] },
  { name: "NET PROFIT", cur: "$67,474.85", prev: "$66,272.10", pct: "2%", ys: [15, 10.7, 9, 4, 3] },
  { name: "TAX", cur: "$31,408.25", prev: "$29,424.53", pct: "7%", ys: [15, 10.7, 9, 7, 3] },
  { name: "", cur: "", prev: "", pct: "", ys: [15, 12, 10, 11, 3] },
];

const App = () => (
  <Window>
    <GlobalStyle />
    <TitleBar>
      <QuickCell $w={48}><SaveIcon /></QuickCell>
      <QuickCell $w={26}><UndoIcon color="#fff" /></QuickCell>
      <QuickCell $w={10}><TinyCaret color="#fff" /></QuickCell>
      <QuickCell $w={28}><UndoIcon color="#5d9a78" flip /></QuickCell>
      <QuickCell $w={10}><TinyCaret color="#5d9a78" /></QuickCell>
      <QuickCell $w={70}><CustomizeIcon /></QuickCell>
      <TitleText>Annual Financial Report (1) - Excel (Product Activation Failed)</TitleText>
      <Spring />
      <QuickCell $w={46}><DisplayIcon /></QuickCell>
      <QuickCell $w={46}><MinIcon /></QuickCell>
      <QuickCell $w={46}><RestoreIcon /></QuickCell>
      <QuickCell $w={44}><CloseIcon /></QuickCell>
    </TitleBar>

    <TabBar>
      <RibbonTab $w={52}>File</RibbonTab>
      <FileGap />
      <RibbonTab $w={60} $active>Home</RibbonTab>
      {ribbonTabs.map(([label, w]) => (
        <RibbonTab key={label} $w={w}>{label}</RibbonTab>
      ))}
      <TellMe><BulbIcon />Tell me what you want to do...</TellMe>
      <Spring />
      <SignIn>Sign in</SignIn>
      <ShareBtn><PersonIcon />Share</ShareBtn>
    </TabBar>

    <Ribbon>
      <Group $w={155}>
        <GroupBody>
          <BigBtn $w={44}>
            <BigIcon $nudge={3}><PasteIcon /></BigIcon>
            <BigLabel>Paste</BigLabel>
            <BigLabel><Caret /></BigLabel>
          </BigBtn>
          <SmallColumn $pl={2} $w={110}>
            <SmallBtn><IconSlot><CutIcon /></IconSlot>Cut</SmallBtn>
            <SmallBtn><IconSlot><CopyIcon /></IconSlot>Copy<Cell $w={18}><Caret /></Cell></SmallBtn>
            <SmallBtn><IconSlot><PainterIcon /></IconSlot>Format Painter</SmallBtn>
          </SmallColumn>
        </GroupBody>
        <GroupFoot $launch>Clipboard<LaunchIcon /></GroupFoot>
      </Group>

      <Group $w={207}>
        <GroupBody $pl={4}>
          <RowStack>
            <ToolRow>
              <Combo $w={111}>Arial<Caret /></Combo>
              <Combo $w={43}>14<Caret /></Combo>
              <Cell $w={23}><GrowFont up /></Cell>
              <Cell $w={22}><GrowFont up={false} /></Cell>
            </ToolRow>
            <ToolRow>
              <Cell $w={21}><Glyph $bold>B</Glyph></Cell>
              <Cell $w={22}><Glyph $italic>I</Glyph></Cell>
              <Cell $w={22}><Glyph $under>U</Glyph></Cell>
              <Cell $w={10}><Caret $dim /></Cell>
              <Cell $w={10}><Sep /></Cell>
              <Cell $w={20}><BorderIcon /></Cell>
              <Cell $w={15}><Caret $dim /></Cell>
              <Cell $w={7}><Sep /></Cell>
              <Cell $w={24}><FillIcon /></Cell>
              <Cell $w={10}><Caret $dim /></Cell>
              <Cell $w={24}><FontColorIcon /></Cell>
              <Cell $w={10}><Caret $dim /></Cell>
            </ToolRow>
          </RowStack>
        </GroupBody>
        <GroupFoot $launch>Font<LaunchIcon /></GroupFoot>
      </Group>

      <Group $w={264}>
        <GroupBody $pl={4}>
          <RowStack>
            <ToolRow>
              <Cell $w={22}><VAlign top={0} /></Cell>
              <Cell $w={21}><VAlign top={3} /></Cell>
              <Cell $w={23}><VAlign top={7} /></Cell>
              <Cell $w={10}><Sep /></Cell>
              <Cell $w={20}><OrientIcon /></Cell>
              <Cell $w={12}><Caret $dim /></Cell>
              <Cell $w={14} />
              <Sep />
              <Cell $w={6} />
              <Cell $w={18}><WrapIcon /></Cell>
              <Cell $w={58} $off>Wrap Text</Cell>
            </ToolRow>
            <ToolRow>
              <Cell $w={22}><Lines align="l" /></Cell>
              <Cell $w={21}><Lines align="c" /></Cell>
              <Cell $w={23}><Lines align="r" /></Cell>
              <Cell $w={10}><Sep /></Cell>
              <Cell $w={20}><IndentIcon out /></Cell>
              <Cell $w={22}><IndentIcon out={false} /></Cell>
              <Cell $w={4} />
              <Sep />
              <Cell $w={6} />
              <Cell $w={18}><MergeIcon /></Cell>
              <Cell $w={89} $off>Merge &amp; Center</Cell>
              <Cell $w={22}><Caret $dim /></Cell>
            </ToolRow>
          </RowStack>
        </GroupBody>
        <GroupFoot $launch>Alignment<LaunchIcon /></GroupFoot>
      </Group>

      <Group $w={140}>
        <GroupBody>
          <RowStack>
            <ToolRow>
              <Combo $w={131} $off>General<ComboDrop><Caret $dim /></ComboDrop></Combo>
            </ToolRow>
            <ToolRow>
              <Cell $w={28}><Glyph $size={16}>$</Glyph></Cell>
              <Cell $w={6}><Caret $dim /></Cell>
              <Cell $w={32}><Glyph $size={15}>%</Glyph></Cell>
              <Cell $w={8}><Glyph $size={15} $bold>,</Glyph></Cell>
              <Cell $w={13} />
              <Sep />
              <Cell $w={26}><DecimalIcon more={false} /></Cell>
              <Cell $w={24}><DecimalIcon more /></Cell>
            </ToolRow>
          </RowStack>
        </GroupBody>
        <GroupFoot $launch>Number<LaunchIcon /></GroupFoot>
      </Group>

      <Group $w={181}>
        <GroupBody>
          <BigBtn $w={80} $off>
            <BigIcon><CondIcon /></BigIcon>
            <BigLabel>Conditional</BigLabel>
            <BigLabel>Formatting<Caret $dim /></BigLabel>
          </BigBtn>
          <BigBtn $w={48} $off>
            <BigIcon $nudge={2}><TableIcon /></BigIcon>
            <BigLabel>Format as</BigLabel>
            <BigLabel>Table<Caret $dim /></BigLabel>
          </BigBtn>
          <BigBtn $w={52} $off>
            <BigIcon $nudge={2}><TableIcon cell /></BigIcon>
            <BigLabel>Cell</BigLabel>
            <BigLabel>Styles<Caret $dim /></BigLabel>
          </BigBtn>
        </GroupBody>
        <GroupFoot>Styles</GroupFoot>
      </Group>

      <Group $w={136}>
        <GroupBody $pl={3}>
          <BigBtn $w={42}>
            <BigIcon><InsertIcon /></BigIcon>
            <BigLabel>Insert</BigLabel>
            <BigLabel><Caret /></BigLabel>
          </BigBtn>
          <BigBtn $w={42}>
            <BigIcon><DeleteIcon /></BigIcon>
            <BigLabel>Delete</BigLabel>
            <BigLabel><Caret /></BigLabel>
          </BigBtn>
          <BigBtn $w={44}>
            <BigIcon><FormatIcon /></BigIcon>
            <BigLabel>Format</BigLabel>
            <BigLabel><Caret /></BigLabel>
          </BigBtn>
        </GroupBody>
        <GroupFoot>Cells</GroupFoot>
      </Group>

      <Group $w={187}>
        <GroupBody>
          <SmallColumn $pl={7} $w={93}>
            <SmallBtn $off><IconSlot><SigmaIcon /></IconSlot>AutoSum<Cell $w={18}><Caret /></Cell></SmallBtn>
            <SmallBtn><IconSlot><FillDown /></IconSlot>Fill<Caret /></SmallBtn>
            <SmallBtn><IconSlot><EraserIcon /></IconSlot>Clear<Caret /></SmallBtn>
          </SmallColumn>
          <BigBtn $w={46} $off>
            <BigIcon><SortIcon /></BigIcon>
            <BigLabel>Sort &amp;</BigLabel>
            <BigLabel>Filter<Caret $dim /></BigLabel>
          </BigBtn>
          <BigBtn $w={40}>
            <BigIcon><FindIcon /></BigIcon>
            <BigLabel>Find &amp;</BigLabel>
            <BigLabel>Select<Caret /></BigLabel>
          </BigBtn>
        </GroupBody>
        <GroupFoot>Editing</GroupFoot>
      </Group>

      <Collapse width="10" height="6" viewBox="0 0 10 6" fill="none">
        <path d="M1 5l4-4 4 4" stroke="#666" strokeWidth="1.500" />
      </Collapse>
    </Ribbon>

    <FormulaBar>
      <FormulaBox $w={101}>
        <NameText>C9</NameText>
        <Cell $w={18}><Caret /></Cell>
      </FormulaBox>
      <FormulaDots>
        <Svg w={3} h={14}>
          <path d="M1.500 1v2M1.500 6v2M1.500 11v2" stroke="#aaa" strokeWidth="2" />
        </Svg>
      </FormulaDots>
      <FormulaBox $w={110}>
        <FxCell>
          <Svg w={11} h={11}><path d="M1 1l9 9M10 1l-9 9" stroke="#bdbdbd" strokeWidth="1.800" /></Svg>
        </FxCell>
        <FxCell>
          <Svg w={13} h={11}><path d="M1 6l4 4 7-9" stroke="#bdbdbd" strokeWidth="1.800" /></Svg>
        </FxCell>
        <FxCell><FxText>fx</FxText></FxCell>
      </FormulaBox>
      <Cell $w={4} />
      <FormulaBox>
        <Spring />
        <Cell $w={18}>
          <Svg w={10} h={6}><path d="M1 1l4 4 4-4" stroke="#777" strokeWidth="1.600" /></Svg>
        </Cell>
      </FormulaBox>
    </FormulaBar>

    <Main>
      <GridArea>
        <ColHeads>
          <Corner>
            <Svg w={5} h={5}><path d="M5 0v5H0z" fill="#bdbdbd" /></Svg>
          </Corner>
          {columns.map(([label, w]) => (
            <ColHead key={label} $w={w} $sel={label === "C"}>{label}</ColHead>
          ))}
        </ColHeads>
        <GridBody>
          <RowHeads>
            {rowHeights.map((h, i) => (
              <RowHead key={i} $h={h} $sel={i === 8} $lift={i === 1 ? 3 : 0}>
                {i < 22 ? i + 1 : ""}
              </RowHead>
            ))}
          </RowHeads>
          <Sheet>
            <Report>
              <ReportHead>
                <TitleBlock>
                  <ReportTitle>ANNUAL FINANCIAL REPORT</ReportTitle>
                  <CompanyName>YOUR COMPANY NAME</CompanyName>
                </TitleBlock>
                <YearBox>2014</YearBox>
              </ReportHead>
              <SectionBar $h={24}>
                <SectionTitle>KEY METRICS</SectionTitle>
                <SectionHint>Click to change report Key Metrics</SectionHint>
              </SectionBar>
              <CardRow>
                {cards.map((c) => (
                  <Card key={c.name}>
                    <CardHead $up={c.up}>{c.name}</CardHead>
                    <CardBody>
                      <CardValue>{c.value}</CardValue>
                      <CardDelta>
                        <TrendArrow down={c.down} />
                        <DeltaText>{c.delta}</DeltaText>
                      </CardDelta>
                      <Spark xs={cardXs} ys={c.ys} w={128} h={16} />
                    </CardBody>
                  </Card>
                ))}
              </CardRow>
              <SectionBar $mt={18} $h={23}>
                <SectionTitle>ALL METRICS</SectionTitle>
                <SectionHint>Do not modify the information below. Click to enter Financial Data</SectionHint>
              </SectionBar>
              <Table>
                <THead>
                  <MetricCell>METRIC</MetricCell>
                  <NumCell>REPORT YEAR (2014)</NumCell>
                  <NumCell>PREVIOUS YEAR (2013)</NumCell>
                  <div />
                  <MidCell>% CHANGE</MidCell>
                  <TrendTitle>5 YEAR TREND</TrendTitle>
                </THead>
                {metrics.map((m, i) => (
                  <TRow key={i} $odd={i % 2 === 0}>
                    <MetricCell>{m.name}</MetricCell>
                    <NumCell>{m.cur}</NumCell>
                    <NumCell>{m.prev}</NumCell>
                    <MidCell><TrendArrow down={m.down} small /></MidCell>
                    <MidCell>{m.pct}</MidCell>
                    <TrendCell><Spark xs={rowXs} ys={m.ys} w={114} h={18} /></TrendCell>
                  </TRow>
                ))}
              </Table>
            </Report>
            <Notes>
              <Note>Select&nbsp; report<br />year in Cell L2</Note>
              <Note $divide>To edit data,<br />select the<br />Financial Data<br />Input sheet</Note>
            </Notes>
            <Selection />
          </Sheet>
        </GridBody>
      </GridArea>
      <VScroll>
        <ScrollBtn $h={15}><UpTri /></ScrollBtn>
        <VThumb />
        <VTrack />
        <ScrollBtn $h={13}><DownTri /></ScrollBtn>
      </VScroll>
    </Main>

    <SheetTabs>
      <TabNav><DimLeft /><DimRight /></TabNav>
      <SheetTab $w={124} $kind="current">Financial Report</SheetTab>
      <Cell $w={2} />
      <SheetTab $w={144} $kind="light">Financial Data Input</SheetTab>
      <TabSep $ml={2} $mr={1} />
      <SheetTab $w={139} $kind="dark">Key Metric Settings</SheetTab>
      <TabSep $ml={1} $mr={0} />
      <AddSheet>
        <Svg w={16} h={16}>
          <circle cx="8" cy="8" r="7.300" stroke="#888" strokeWidth="1.200" />
          <path d="M8 4v8M4 8h8" stroke="#777" strokeWidth="1.500" />
        </Svg>
      </AddSheet>
      <TabDots />
      <HScroll>
        <ScrollBtn $w={15}><LeftTri /></ScrollBtn>
        <HThumb />
        <HTrack />
        <ScrollBtn $w={14}><RightTri /></ScrollBtn>
      </HScroll>
    </SheetTabs>

    <StatusBar>
      <StatusMark $ml={57} $w={11} />
      <ViewActive><ViewIcon /></ViewActive>
      <StatusMark $ml={12} $w={13} />
      <StatusMark $ml={25} $w={13} />
      <ZoomTick />
    </StatusBar>

    <Watermark>
      <WatermarkTitle>Activate Windows</WatermarkTitle>
      <WatermarkSub>Go to Settings to activate Windows.</WatermarkSub>
    </Watermark>
  </Window>
);

export default App;
